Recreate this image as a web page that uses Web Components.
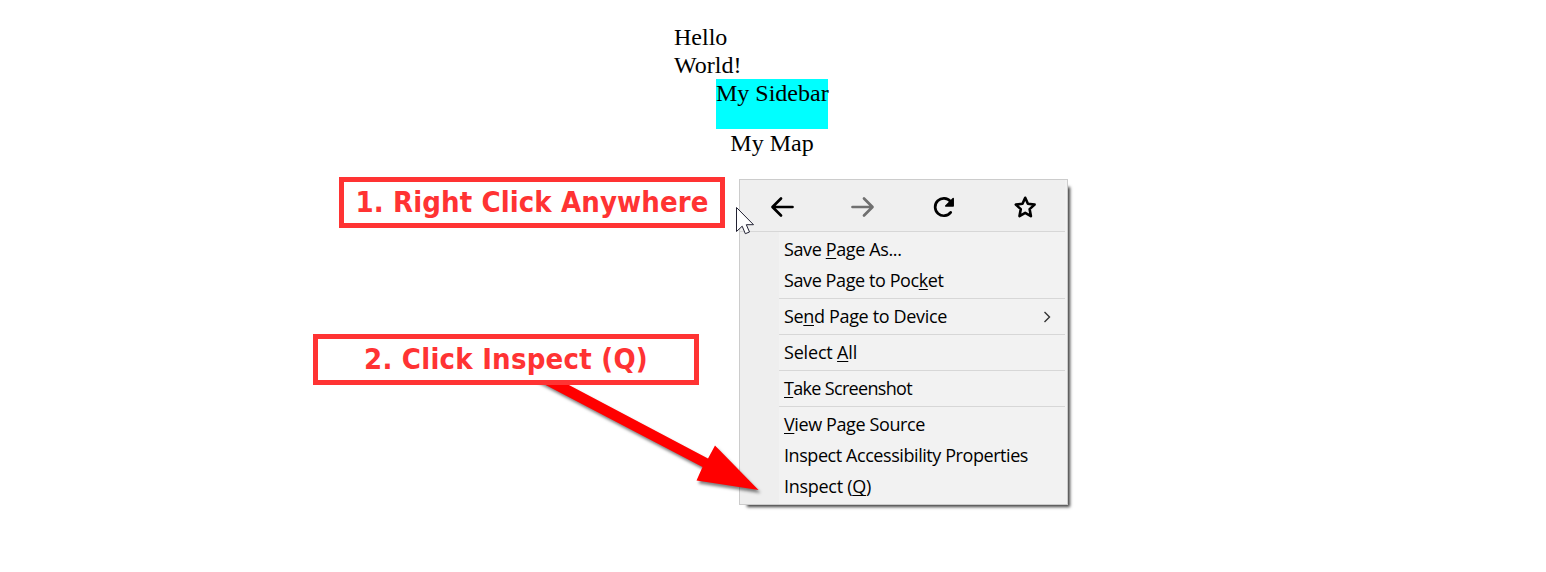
<!DOCTYPE html>
<html lang="en">
<head>
<meta charset="utf-8">
<title>Open the inspector</title>
<style>html,body{margin:0;background:#fff}</style>
</head>
<body>
<tutorial-stage>
  <demo-page></demo-page>
  <context-menu slot="overlay">
    <nav-bar></nav-bar>
    <menu-group>
      <menu-row width="117.5">Save <u>P</u>age As...</menu-row>
      <menu-row width="159.5">Save Page to Poc<u>k</u>et</menu-row>
    </menu-group>
    <menu-group><menu-row width="163" submenu>Se<u>n</u>d Page to Device</menu-row></menu-group>
    <menu-group><menu-row width="73">Select <u>A</u>ll</menu-row></menu-group>
    <menu-group><menu-row width="128"><u>T</u>ake Screenshot</menu-row></menu-group>
    <menu-group>
      <menu-row width="141"><u>V</u>iew Page Source</menu-row>
      <menu-row width="244">Inspect Accessibility Properties</menu-row>
      <menu-row width="87">Inspect (<u>Q</u>)</menu-row>
    </menu-group>
  </context-menu>
  <pointer-arrow slot="overlay"></pointer-arrow>
  <step-callout slot="overlay" width="353" style="left:339px;top:177px">1. Right Click Anywhere</step-callout>
  <step-callout slot="overlay" width="284" style="left:313px;top:334px">2. Click Inspect (Q)</step-callout>
  <mouse-cursor slot="overlay"></mouse-cursor>
</tutorial-stage>
<script>
function define(name, html, ready) {
  const t = document.createElement('template');
  t.innerHTML = html;
  customElements.define(name, class extends HTMLElement {
    constructor() {
      super();
      this.attachShadow({mode: 'open'}).append(t.content.cloneNode(true));
    }
    connectedCallback() { if (ready) ready(this); }
  });
}
// Spreads the label's letters over the width given in the attribute.
function fitLabel(host) {
  const label = host.shadowRoot.querySelector('.label');
  const natural = label.getBoundingClientRect().width;
  const n = host.textContent.trim().length;
  label.style.letterSpacing = ((+host.getAttribute('width') - natural) / n) + 'px';
}
define('tutorial-stage', `<style>
:host{display:block;position:relative;width:1546px;height:572px;overflow:hidden;background:#fff}
</style><slot></slot><slot name="overlay"></slot>`);

define('demo-page', `<style>
:host{display:flex;flex-direction:column;align-items:center;width:196px;margin-left:674px;padding-top:23px;font:24px/28px "Liberation Serif",serif;color:#000;box-sizing:border-box}
.hello{width:90px;align-self:flex-start}
.side{width:112px;height:50px;background:#0ff;white-space:nowrap}
.map{line-height:28px}
</style><div class="hello">Hello<br>World!</div><div class="side">My Sidebar</div><div class="map">My Map</div>`);

define('context-menu', `<style>
:host{display:flex;flex-direction:column;position:absolute;left:739px;top:179px;width:329px;height:326px;box-sizing:border-box;border:1px solid #ccc;background:linear-gradient(to right,#eee 39px,#f2f2f2 39px);box-shadow:5px 5px 3px -3px rgba(0,0,0,.75);padding-right:2px}
</style><slot></slot>`);

define('nav-bar', `<style>
:host{display:grid;grid-template-columns:repeat(4,81px);align-items:center;height:51px;border-bottom:1px solid #d7d7d7;margin-bottom:2px;background:#efefef}
svg{display:block;width:24px;height:24px;margin-left:30px;margin-top:3px;fill:none;stroke:#000;stroke-width:2.7;stroke-linecap:round;stroke-linejoin:round}
</style>
<svg viewBox="0 0 24 24"><path d="M22.5 12H3M11 3.5L2.5 12l8.500 8.500"/></svg>
<svg viewBox="0 0 24 24" style="stroke:#707070"><path d="M1.500 12H21M13 3.500l8.500 8.500-8.500 8.500"/></svg>
<svg viewBox="0 0 24 24"><path d="M18.700 17.400A8.700 8.700 0 1 1 18.500 6.400"/><path d="M21.200 3.500v7.500h-7.500z" fill="#000" stroke-width="1.500"/></svg>
<svg viewBox="0 0 24 24"><path stroke-width="2.600" d="M12.200 2.800l2.700 6 6.700.8-5 4.500 1.300 7-5.700-3.300-5.700 3.300 1.300-7-5-4.500 6.700-.8z"/></svg>`);

define('menu-group', `<style>
:host{display:flex;flex-direction:column}
:host(:not(:last-of-type))::after{content:"";height:1px;margin:2px 0 2px 39px;background:#d7d7d7}
</style><slot></slot>`);

define('menu-row', `<style>
:host{display:flex;align-items:center;justify-content:space-between;height:31px;padding:0 14px 0 44px;font:18px/31px "Open Sans","Noto Sans",sans-serif;color:#000}
.label{white-space:nowrap}
::slotted(u){text-decoration-thickness:1px;text-underline-offset:2px;text-decoration-skip-ink:none}
svg{display:none;width:8px;height:12px;fill:none;stroke:#333;stroke-width:1.400}
:host([submenu]) svg{display:block}
</style><span class="label"><slot></slot></span><svg viewBox="0 0 8 12"><path d="M1.500 1l5 5-5 5"/></svg>`, fitLabel);

define('step-callout', `<style>
:host{display:flex;justify-content:center;position:absolute;box-sizing:border-box;width:386px;height:51px;border:5px solid #f33;background:#fff;color:#f33;font:bold 29px/41px "DejaVu Sans",sans-serif;font-stretch:condensed}
.label{white-space:nowrap}
</style><span class="label"><slot></slot></span>`, fitLabel);

define('pointer-arrow', `<style>
:host{display:block;position:absolute;left:530px;top:375px;width:240px;height:130px}
svg{display:block;filter:drop-shadow(2px 3px 1.500px rgba(0,0,0,.5))}
</style><svg width="240" height="130" viewBox="0 0 240 130"><path fill="#f00" d="M0 0L20 0 178 83.500 185 70.500 228.500 115 166.500 105.500 172.500 92 6 5z"/></svg>`);

define('mouse-cursor', `<style>
:host{display:block;position:absolute;left:735px;top:206px}
svg{display:block}
</style><svg width="22" height="30" viewBox="0 0 22 30"><path fill="#fff" stroke="#223" stroke-width="1" d="M1.500 1.500V25.500L7.200 20.200 10.300 27.700 14.500 26 11.300 18.700H18.500z"/></svg>`);
</script>
</body>
</html>
